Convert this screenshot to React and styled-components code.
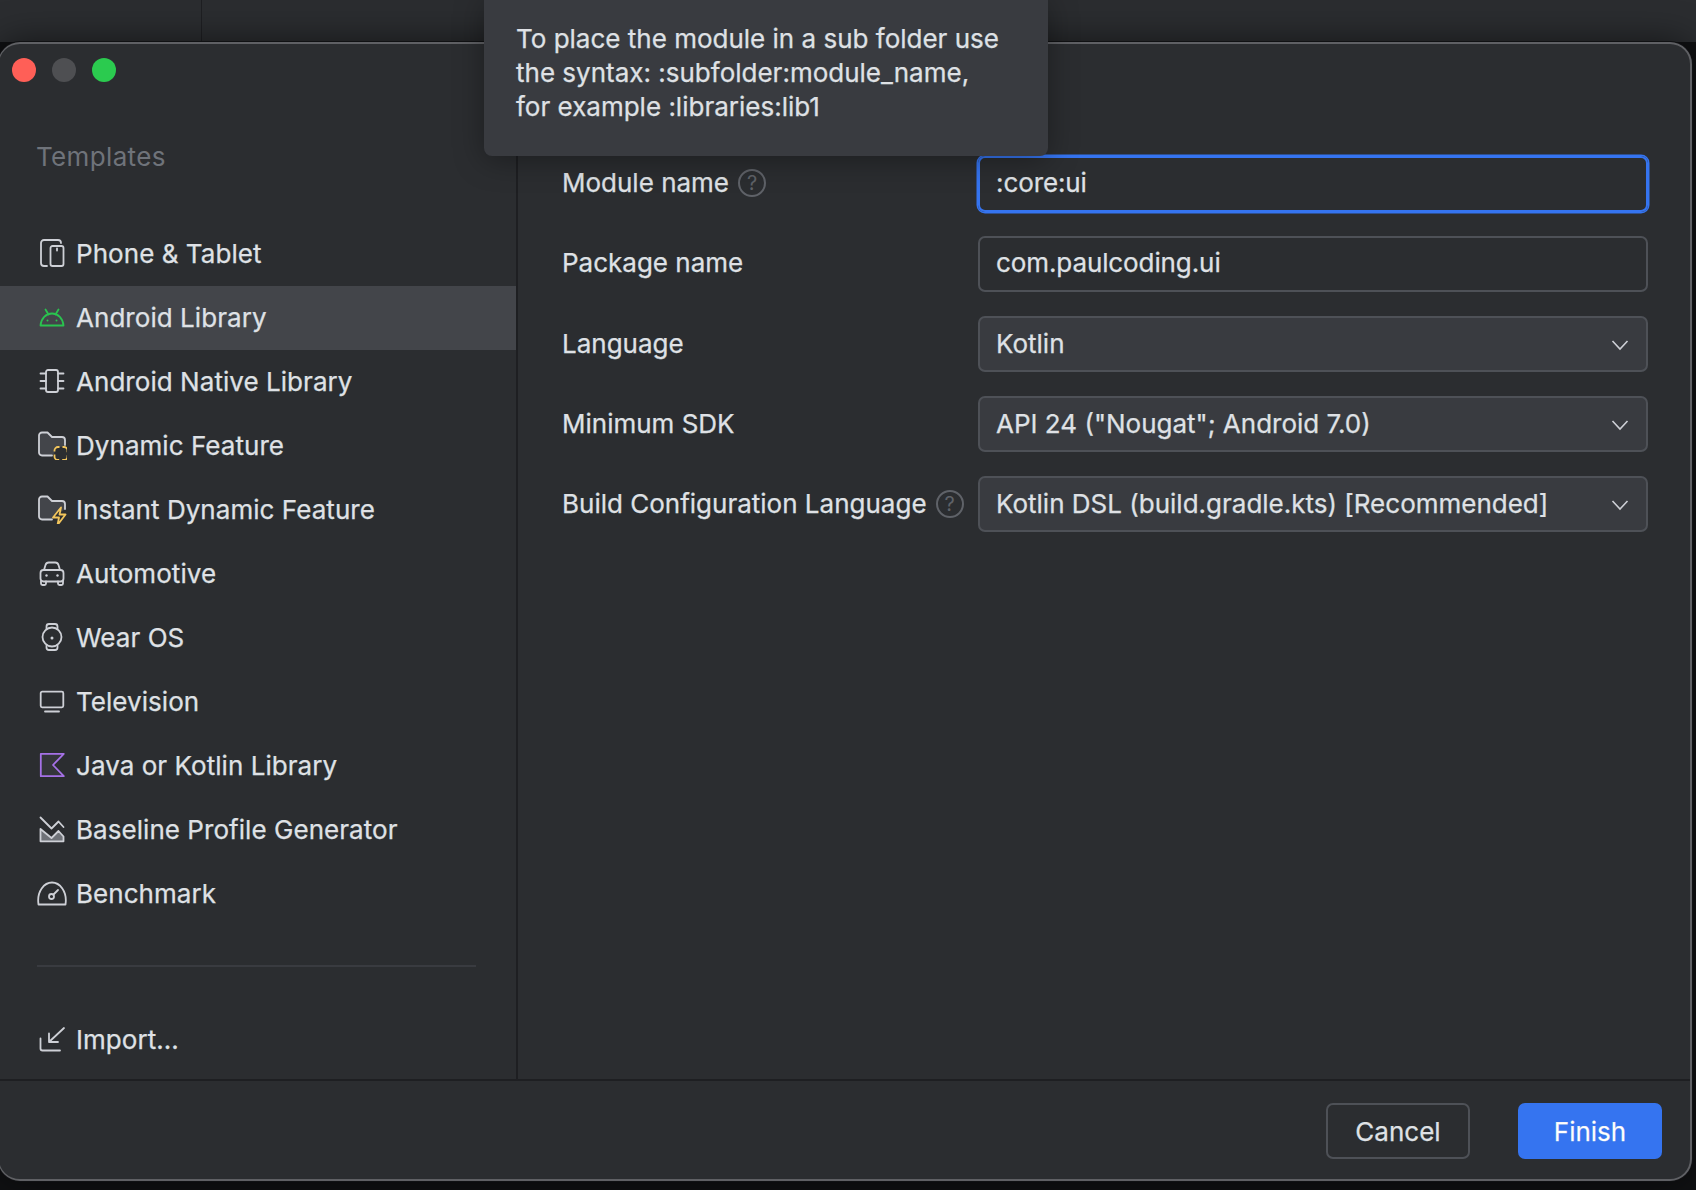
import React from 'react';
import styled, { createGlobalStyle } from 'styled-components';

const stroke = '#ced0d6';
const fill = '#43454a';
const yellow = '#f2c55c';

const Icon = ({ children }) => (
  <IconSvg viewBox="0 0 30 30" fill="none" stroke={stroke} strokeWidth="1.8" strokeLinecap="round" strokeLinejoin="round">
    {children}
  </IconSvg>
);

const FOLDER = 'M15 25.5H5a3 3 0 0 1-3-3V5.500a3 3 0 0 1 3-3h5.500l4.500 4.500h10a3 3 0 0 1 3 3v5';

const icons = {
  phone: (
    <Icon>
      <path d="M10 28H7a3 3 0 0 1-3-3V5a3 3 0 0 1 3-3h14a3 3 0 0 1 3 3" />
      <rect x="13.500" y="8" width="13" height="20" rx="2" />
      <path d="M20 10.500v2" />
    </Icon>
  ),
  android: (
    <Icon>
      <g stroke="#2ac34f">
        <path d="M3.500 23.500C4 16.500 9 11.500 15 11.500s11 5 11.500 12z" />
        <path d="M8.500 7.500l3 5M21.500 7.500l-3 5" />
      </g>
      <circle cx="10.500" cy="18.500" r="1" fill="#2ac34f" stroke="none" />
      <circle cx="19.500" cy="18.500" r="1" fill="#2ac34f" stroke="none" />
    </Icon>
  ),
  native: (
    <Icon>
      <rect x="9" y="4" width="12" height="22" rx="2" />
      <path d="M3.500 7.500H9M3.500 15H9M3.500 22.500H9M21 7.500h5.500M21 15h5.500M21 22.500h5.500" />
    </Icon>
  ),
  dynamic: (
    <Icon>
      <path d={FOLDER} fill={fill} />
      <rect x="17.500" y="17" width="13" height="13" rx="3.500" fill="#2b2d30" stroke={yellow} strokeLinecap="butt" strokeDasharray="8.500 3" strokeDashoffset="-4.500" />
    </Icon>
  ),
  instant: (
    <Icon>
      <path d={FOLDER} fill={fill} />
      <path d="M24 13.500l-8 10h6l-1.500 7.500 8-10.500h-6z" fill="#2b2d30" stroke={yellow} />
    </Icon>
  ),
  car: (
    <Icon>
      <path d="M7 12l1.500-5a3.500 3.500 0 0 1 3.300-2.500h6.400A3.500 3.500 0 0 1 21.500 7L23 12" />
      <rect x="3.500" y="12" width="23" height="11.500" rx="3" />
      <path d="M4 23v2.500a1.500 1.500 0 0 0 1.500 1.500h2A1.500 1.500 0 0 0 9 25.500V23.500M21 23.500v2a1.500 1.500 0 0 0 1.500 1.500h2a1.500 1.500 0 0 0 1.500-1.500V23" />
      <circle cx="9.500" cy="17.500" r="1.200" fill={stroke} stroke="none" />
      <circle cx="20.500" cy="17.500" r="1.200" fill={stroke} stroke="none" />
    </Icon>
  ),
  watch: (
    <Icon>
      <circle cx="15" cy="15" r="9.500" />
      <path d="M9.500 7V4.500A2.500 2.500 0 0 1 12 2h6a2.500 2.500 0 0 1 2.500 2.500V7M9.500 23v2.500A2.500 2.500 0 0 0 12 28h6a2.500 2.500 0 0 0 2.500-2.500V23" />
      <circle cx="15" cy="16" r="1.500" fill={stroke} stroke="none" />
    </Icon>
  ),
  tv: (
    <Icon>
      <rect x="3.700" y="5.700" width="22.600" height="15.600" rx="1.500" />
      <path d="M8 25.500h14" />
    </Icon>
  ),
  kotlin: (
    <Icon>
      <path d="M3.800 3.800h23L16 15l10.800 11.200h-23z" fill="#34353a" stroke="#a571e6" />
    </Icon>
  ),
  baseline: (
    <Icon>
      <path d="M3.500 3.500l11 11 7-7 5 5.500" />
      <path d="M3.500 15l11 9 7-7 5 5.500v4.800h-23z" fill="#6f7278" />
    </Icon>
  ),
  gauge: (
    <Icon>
      <path d="M1.500 26.500C-.5 13 7.500 4.500 15 4.500S30.500 13 28.500 26.500z" />
      <circle cx="14.500" cy="18.500" r="2.500" />
      <path d="M16.500 16.500l4.500-4.500" />
    </Icon>
  ),
  arrow: (
    <Icon>
      <path d="M3.500 14.500v10a2 2 0 0 0 2 2H23" />
      <path d="M27 4L12 18M12 9.500V18h9" />
    </Icon>
  ),
};

const TEMPLATES = [
  { name: 'Phone & Tablet', icon: 'phone' },
  { name: 'Android Library', icon: 'android', selected: true },
  { name: 'Android Native Library', icon: 'native' },
  { name: 'Dynamic Feature', icon: 'dynamic' },
  { name: 'Instant Dynamic Feature', icon: 'instant' },
  { name: 'Automotive', icon: 'car' },
  { name: 'Wear OS', icon: 'watch' },
  { name: 'Television', icon: 'tv' },
  { name: 'Java or Kotlin Library', icon: 'kotlin' },
  { name: 'Baseline Profile Generator', icon: 'baseline' },
  { name: 'Benchmark', icon: 'gauge' },
];

const SelectField = ({ value }) => (
  <Select>
    <span>{value}</span>
    <Chevron viewBox="0 0 18 12" fill="none" stroke="#ced0d6" strokeWidth="1.6">
      <path d="M1.500 2l7.500 8 7.500-8" />
    </Chevron>
  </Select>
);

export default function App() {
  return (
    <>
      <GlobalStyle />
      <Page>
        <TopStrip>
          <StripTab />
        </TopStrip>
        <Window>
          <Main>
            <Sidebar>
              <TrafficLights>
                <Light $color="#ff5f57" />
                <Light $color="#4e4f52" />
                <Light $color="#2bcb4f" />
              </TrafficLights>
              <SidebarTitle>Templates</SidebarTitle>
              <TemplateList>
                {TEMPLATES.map((t) => (
                  <TemplateRow key={t.name} $selected={t.selected}>
                    {icons[t.icon]}
                    {t.name}
                  </TemplateRow>
                ))}
              </TemplateList>
              <Divider />
              <TemplateRow>
                {icons.arrow}
                Import...
              </TemplateRow>
            </Sidebar>
            <Form>
              <FieldRow>
                <Label $raised>
                  Module name <Help>?</Help>
                </Label>
                <Input $focused>:core:ui</Input>
              </FieldRow>
              <FieldRow>
                <Label $raised>Package name</Label>
                <Input>com.paulcoding.ui</Input>
              </FieldRow>
              <FieldRow>
                <Label>Language</Label>
                <SelectField value="Kotlin" />
              </FieldRow>
              <FieldRow>
                <Label>Minimum SDK</Label>
                <SelectField value={'API 24 ("Nougat"; Android 7.0)'} />
              </FieldRow>
              <FieldRow>
                <Label>
                  Build Configuration Language <Help>?</Help>
                </Label>
                <SelectField value="Kotlin DSL (build.gradle.kts) [Recommended]" />
              </FieldRow>
            </Form>
          </Main>
          <Footer>
            <CancelButton>Cancel</CancelButton>
            <FinishButton>Finish</FinishButton>
          </Footer>
        </Window>
        <Tooltip>
          To place the module in a sub folder use
          <br />
          the syntax: :subfolder:module_name,
          <br />
          for example :libraries:lib1
        </Tooltip>
      </Page>
    </>
  );
}

const GlobalStyle = createGlobalStyle`
  html, body {
    margin: 0;
    background: #101113;
  }
  body {
    font-family: Inter, "Noto Sans", sans-serif;
    font-size: 26px;
    color: #dfe1e5;
    -webkit-text-stroke: 0.25px #dfe1e5;
  }
`;

const Page = styled.div`
  position: relative;
  width: 1696px;
  height: 1190px;
  overflow: hidden;
  background: #101113;
`;

const TopStrip = styled.div`
  height: 42px;
  background: #2b2d30;
`;

const StripTab = styled.div`
  width: 201px;
  height: 42px;
  border-right: 1px solid #1e1f22;
`;

const Window = styled.div`
  position: relative;
  box-sizing: border-box;
  width: 1694px;
  height: 1139px;
  margin-left: -2px;
  display: flex;
  flex-direction: column;
  background: #2b2d30;
  border: 2px solid #5f6064;
  border-left-width: 1px;
  border-radius: 22px;
  box-shadow: 0 0 0 1px #101113, 0 0 36px rgba(0, 0, 0, 0.55);
`;

const Main = styled.div`
  flex: 1;
  display: flex;
  min-height: 0;
`;

const Sidebar = styled.div`
  width: 517px;
  flex-shrink: 0;
  border-right: 2px solid #1e1f22;
`;

const TrafficLights = styled.div`
  display: flex;
  gap: 16px;
  padding: 14px 0 0 13px;
`;

const Light = styled.span`
  width: 24px;
  height: 24px;
  border-radius: 50%;
  background: ${(p) => p.$color};
`;

const SidebarTitle = styled.div`
  margin: 59px 0 49px 37px;
  height: 32px;
  line-height: 32px;
  letter-spacing: 0.35px;
  color: #6f737a;
  -webkit-text-stroke: 0;
`;

const TemplateList = styled.div`
  display: flex;
  flex-direction: column;
`;

const TemplateRow = styled.div`
  box-sizing: border-box;
  height: 64px;
  display: flex;
  align-items: center;
  gap: 9px;
  padding: 0 0 2px 38px;
  letter-spacing: 0.05px;
  background: ${(p) => (p.$selected ? '#43454a' : 'transparent')};
`;

const IconSvg = styled.svg`
  width: 30px;
  height: 30px;
  flex-shrink: 0;
`;

const Divider = styled.div`
  height: 2px;
  margin: 39px 40px 41px 38px;
  background: #393b40;
`;

const Form = styled.div`
  flex: 1;
  display: flex;
  flex-direction: column;
  gap: 24px;
  padding: 112px 42px 0 44px;
`;

const FieldRow = styled.div`
  display: grid;
  grid-template-columns: 416px 1fr;
  align-items: center;
`;

const Label = styled.div`
  display: flex;
  align-items: center;
  gap: 9px;
  padding-bottom: ${(p) => (p.$raised ? '3px' : '1px')};
`;

const Help = styled.span`
  box-sizing: border-box;
  width: 28px;
  height: 28px;
  display: flex;
  align-items: center;
  justify-content: center;
  border: 2px solid #5f6268;
  border-radius: 50%;
  font-size: 20px;
  color: #5f6268;
  -webkit-text-stroke: 0;
`;

const Input = styled.div`
  box-sizing: border-box;
  height: 56px;
  display: flex;
  align-items: center;
  padding: 0 16px 3px;
  letter-spacing: -0.1px;
  border-radius: 7px;
  border: 2px solid ${(p) => (p.$focused ? '#3574f0' : '#4e5157')};
  box-shadow: ${(p) => (p.$focused ? '0 0 0 1.5px #3574f0' : 'none')};
`;

const Select = styled.div`
  box-sizing: border-box;
  height: 56px;
  display: flex;
  align-items: center;
  justify-content: space-between;
  padding: 0 17px 2px 16px;
  background: #393b40;
  border: 2px solid #4e5157;
  border-radius: 7px;
`;

const Chevron = styled.svg`
  width: 18px;
  height: 12px;
  margin-top: 3px;
`;

const Footer = styled.div`
  height: 100px;
  flex-shrink: 0;
  box-sizing: border-box;
  display: flex;
  justify-content: flex-end;
  gap: 48px;
  padding: 22px 28px 0 0;
  border-top: 2px solid #1e1f22;
`;

const CancelButton = styled.div`
  box-sizing: border-box;
  width: 144px;
  height: 56px;
  display: flex;
  align-items: center;
  justify-content: center;
  border: 2px solid #4e5157;
  border-radius: 7px;
`;

const FinishButton = styled(CancelButton)`
  border: 0;
  background: #3574f0;
  color: #fff;
`;

const Tooltip = styled.div`
  position: absolute;
  top: 0;
  left: 484px;
  box-sizing: border-box;
  width: 564px;
  height: 156px;
  padding: 22px 0 0 32px;
  line-height: 34px;
  background: #393b40;
  border-radius: 0 0 8px 8px;
  box-shadow: 0 4px 30px rgba(0, 0, 0, 0.35);
`;
